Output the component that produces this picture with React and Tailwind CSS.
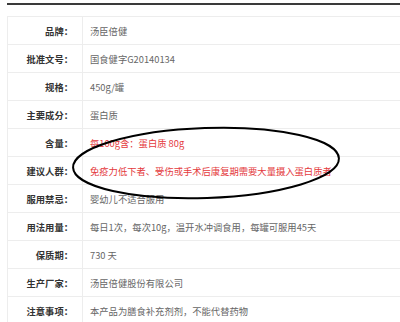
import React from 'react';

const rows = [
  { label: '品牌：', value: '汤臣倍健' },
  { label: '批准文号：', value: '国食健字G20140134' },
  { label: '规格：', value: '450g/罐' },
  { label: '主要成分：', value: '蛋白质' },
  { label: '含量：', value: '每100g含：蛋白质 80g', red: true },
  { label: '建议人群：', value: '免疫力低下者、受伤或手术后康复期需要大量摄入蛋白质者', red: true },
  { label: '服用禁忌：', value: '婴幼儿不适合服用' },
  { label: '用法用量：', value: '每日1次，每次10g，温开水冲调食用，每罐可服用45天' },
  { label: '保质期：', value: '730 天' },
  { label: '生产厂家：', value: '汤臣倍健股份有限公司' },
  { label: '注意事项：', value: '本产品为膳食补充剂剂，不能代替药物' },
];

export default function App() {
  return (
    <div
      className="relative w-[400px] h-[322px] overflow-hidden bg-white text-[9.3px]"
      style={{ fontFamily: '"Noto Sans CJK SC", "Microsoft YaHei", sans-serif' }}
    >
      <div className="ml-[7px] mt-[3px] h-[2px] bg-[#3a3a3a]" />
      <div className="ml-[7px] mt-[11px] w-[420px] border-l border-t border-[#ededed]">
        {rows.map(row => (
          <div key={row.label} className="flex h-[28px] border-b border-[#ededed]">
            <div className="w-[75px] shrink-0 border-r border-[#ededed] pr-[9px] pt-[3px] flex items-center justify-end font-bold text-[#333]">
              {row.label}
            </div>
            <div className={`pl-[7px] pt-[3px] flex items-center ${row.red ? 'text-[#e4393c]' : 'text-[#666]'}`}>
              {row.value}
            </div>
          </div>
        ))}
      </div>
      <svg className="absolute left-0 top-0 pointer-events-none" width="400" height="322">
        <ellipse cx="206" cy="163" rx="133" ry="35" fill="none" stroke="#000" strokeWidth="2" transform="rotate(-2 206 163)" />
      </svg>
    </div>
  );
}
